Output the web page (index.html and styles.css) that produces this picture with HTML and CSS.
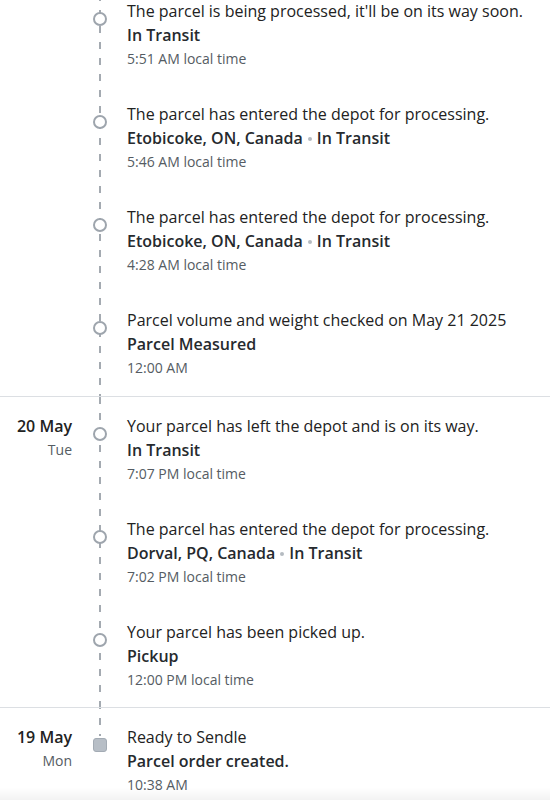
FILE: index.html
```html
<!DOCTYPE html>
<html lang="en">
<head>
<meta charset="utf-8">
<title>Tracking</title>
<link rel="stylesheet" href="styles.css">
</head>
<body>
<div class="timeline">
  <section class="day day-first">
    <div class="date"></div>
    <div class="events">
      <div class="event">
        <div class="rail"><span class="dot"></span></div>
        <div class="info">
          <div class="desc">The parcel is being processed, it'll be on its way soon.</div>
          <div class="status">In Transit</div>
          <div class="time">5:51 AM local time</div>
        </div>
      </div>
      <div class="event">
        <div class="rail"><span class="dot"></span></div>
        <div class="info">
          <div class="desc">The parcel has entered the depot for processing.</div>
          <div class="status">Etobicoke, ON, Canada<span class="sep"></span>In Transit</div>
          <div class="time">5:46 AM local time</div>
        </div>
      </div>
      <div class="event">
        <div class="rail"><span class="dot"></span></div>
        <div class="info">
          <div class="desc">The parcel has entered the depot for processing.</div>
          <div class="status">Etobicoke, ON, Canada<span class="sep"></span>In Transit</div>
          <div class="time">4:28 AM local time</div>
        </div>
      </div>
      <div class="event">
        <div class="rail"><span class="dot"></span></div>
        <div class="info">
          <div class="desc">Parcel volume and weight checked on May 21 2025</div>
          <div class="status">Parcel Measured</div>
          <div class="time">12:00 AM</div>
        </div>
      </div>
    </div>
  </section>

  <section class="day day-mid">
    <div class="date">
      <div class="date-day">20 May</div>
      <div class="date-week">Tue</div>
    </div>
    <div class="events">
      <div class="event">
        <div class="rail"><span class="dot"></span></div>
        <div class="info">
          <div class="desc">Your parcel has left the depot and is on its way.</div>
          <div class="status">In Transit</div>
          <div class="time">7:07 PM local time</div>
        </div>
      </div>
      <div class="event">
        <div class="rail"><span class="dot"></span></div>
        <div class="info">
          <div class="desc">The parcel has entered the depot for processing.</div>
          <div class="status">Dorval, PQ, Canada<span class="sep"></span>In Transit</div>
          <div class="time">7:02 PM local time</div>
        </div>
      </div>
      <div class="event">
        <div class="rail"><span class="dot"></span></div>
        <div class="info">
          <div class="desc">Your parcel has been picked up.</div>
          <div class="status">Pickup</div>
          <div class="time">12:00 PM local time</div>
        </div>
      </div>
    </div>
  </section>

  <section class="day day-last">
    <div class="date">
      <div class="date-day">19 May</div>
      <div class="date-week">Mon</div>
    </div>
    <div class="events">
      <div class="event">
        <div class="rail"><span class="dot dot-square"></span></div>
        <div class="info">
          <div class="desc">Ready to Sendle</div>
          <div class="status">Parcel order created.</div>
          <div class="time">10:38 AM</div>
        </div>
      </div>
    </div>
  </section>
</div>
<div class="fade"></div>
</body>
</html>
```

FILE: styles.css
```css
html, body {
  margin: 0;
  padding: 0;
  background: #ffffff;
}

body {
  font-family: "Open Sans", "Noto Sans", sans-serif;
  color: #222222;
  width: 550px;
  overflow: hidden;
}

.timeline {
  margin-top: -1px;
}

.day {
  display: grid;
  grid-template-columns: 72px 1fr;
  background-image: linear-gradient(to bottom, #a4aab1 0 7px, transparent 7px 16px);
  background-repeat: repeat-y;
  background-size: 2px 16px;
  background-origin: border-box;
}

.day-first {
  padding: 0 0 16px;
  background-position: 99px 11px;
}

.day-mid {
  border-top: 1px solid #dcdfe3;
  padding: 17px 0 15px;
  background-position: 99px 1px;
}

.day-last {
  border-top: 1px solid #dcdfe3;
  padding: 17px 0 4px;
  background-image: repeating-linear-gradient(to bottom, #a4aab1 0 7px, transparent 7px 16px);
  background-repeat: no-repeat;
  background-size: 2px 34px;
  background-position: 99px -5px;
}

.date {
  text-align: right;
}

.date-day {
  font-size: 16px;
  line-height: 24px;
  font-weight: 600;
  color: #222222;
}

.date-week {
  font-size: 14px;
  line-height: 24px;
  color: #555c63;
}

.events {
  display: flex;
  flex-direction: column;
  gap: 31px;
}

.event {
  display: grid;
  grid-template-columns: 55px 1fr;
}

.rail {
  display: flex;
  align-items: flex-start;
}

.dot {
  display: block;
  box-sizing: border-box;
  width: 14px;
  height: 14px;
  margin: 13px 0 0 21px;
  border: 2px solid #9ea5ad;
  border-radius: 50%;
  background: #ffffff;
}

.dot-square {
  margin-top: 13px;
  border: 1px solid #a3abb4;
  border-radius: 3px;
  background: #b7bec6;
}

.info {
  display: flex;
  flex-direction: column;
}

.desc {
  font-size: 16px;
  line-height: 24px;
  color: #222222;
}

.status {
  font-size: 16px;
  line-height: 24px;
  font-weight: 600;
  color: #262a2e;
  display: flex;
  align-items: center;
}

.sep {
  display: inline-block;
  width: 4px;
  height: 4px;
  border-radius: 50%;
  background: #b5bbc1;
  margin: 2px 5px 0;
}

.time {
  font-size: 14px;
  line-height: 24px;
  color: #555c63;
}

.fade {
  position: fixed;
  left: 0;
  right: 0;
  bottom: 0;
  height: 12px;
  background: linear-gradient(to bottom, rgba(0, 0, 0, 0), rgba(0, 0, 0, 0.05));
  pointer-events: none;
}
```
